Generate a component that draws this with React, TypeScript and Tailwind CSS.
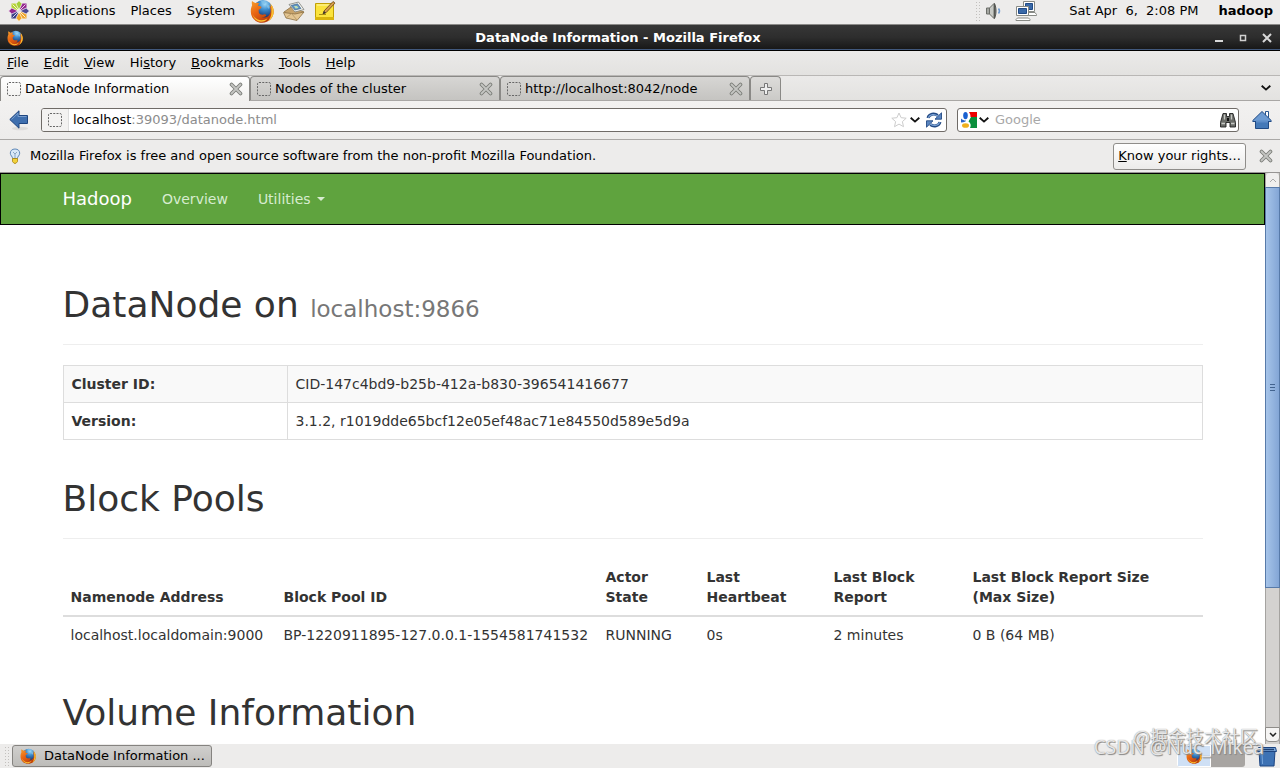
import React from 'react';

const Firefox = ({ className = '' }: { className?: string }) => (
  <svg viewBox="0 0 24 24" className={className} aria-hidden="true">
    <defs>
      <radialGradient id="ffBlue" cx="60%" cy="20%" r="75%">
        <stop offset="0" stopColor="#a5dcf8" />
        <stop offset=".4" stopColor="#3f8fd0" />
        <stop offset="1" stopColor="#14306c" />
      </radialGradient>
      <linearGradient id="ffFox" x1="0" y1="0" x2=".7" y2="1">
        <stop offset="0" stopColor="#f8a02c" />
        <stop offset=".45" stopColor="#e96613" />
        <stop offset="1" stopColor="#b5350a" />
      </linearGradient>
    </defs>
    <circle cx="13" cy="10.500" r="9.500" fill="url(#ffBlue)" />
    <path d="M11 2c2-.5 4 0 5 1l-1 2-3-.5zM17 5l3 2-1 3-2-2z" fill="#7fc0ea" opacity=".8" />
    <path d="M2 2c1.200 1 2.200 1.600 3.500 2C6.800 3.500 8 3.600 9.300 4.200 8.400 5 8 6 8.300 7c1.300.1 2.500.3 3.300 1-.5 1.500-2 2-3 3 .1.900.3 1.500.1 2.200 1 2.300 3 2.900 5 2.300 1.200-.4 2.200 0 2.600 1-1.200 1.400-2.900 2-4.600 1.700 4 1 7.300-.6 8.500-4 .9-2.600.3-5.500-.9-7.700 1 .5 1.600 1.100 2.100 1.900-.1-1.500-.6-2.800-1.400-4 2.400 1.900 3.700 5 3.700 8.200 0 6.200-5 11.200-11.400 11.200C5.900 23.800.8 18.900.8 12.700.8 10 1.200 8 2.100 6.200 1.700 4.700 1.700 3.300 2 2z" fill="url(#ffFox)" />
    <path d="M20 4.400c2.400 1.900 3.700 5 3.700 8.200 0 4.500-2.600 8.300-6.400 10.100 3.200-2.900 4.400-7 4.100-11.200.2-2.600-.2-5-1.400-7.100zM2.500 15c1.700 4 5 6.300 9 6.300 2.600 0 4.500-.8 6-2-1.300 2.700-3.800 3.700-6.700 3.500C6.700 22.400 3.500 19.500 2.500 15z" fill="#fbc02f" />
  </svg>
);

const CentOS = () => (
  <svg viewBox="0 0 22 22" className="h-[22px] w-[22px]" aria-hidden="true">
    <path d="M3.500 3.500h6.800v6.800H3.500z" fill="#b4d334" />
    <path d="M11.700 3.500h6.800v6.800h-6.800z" fill="#93278f" />
    <path d="M3.500 11.700h6.800v6.800H3.500z" fill="#3b3f86" />
    <path d="M11.700 11.700h6.800v6.800h-6.800z" fill="#f0a62a" />
    <path d="M11 .5l3 3.300L11 10 8 3.800z" fill="#a3cf3a" stroke="#fff" strokeWidth=".7" />
    <path d="M21.500 11l-3.300 3L12 11l6.200-3z" fill="#4f4a91" stroke="#fff" strokeWidth=".7" />
    <path d="M11 21.500l-3-3.300L11 12l3 6.200z" fill="#f0a62a" stroke="#fff" strokeWidth=".7" />
    <path d="M.5 11l3.300-3L10 11l-6.200 3z" fill="#93278f" stroke="#fff" strokeWidth=".7" />
    <path d="M4.500 4.500L10 10M17.500 4.500L12 10M4.500 17.500L10 12M17.500 17.500L12 12" stroke="#fff" strokeWidth=".8" />
  </svg>
);

const Envelope = () => (
  <svg viewBox="0 0 24 22" className="h-[22px] w-6" aria-hidden="true">
    <path d="M2 12l7-5 13 5-8 6z" fill="#c7a36b" stroke="#8d7145" strokeWidth=".8" />
    <path d="M7 4.500L16.500 2 22 9.500l-9 2.500z" fill="#f4f4f1" stroke="#7c7f79" strokeWidth=".8" />
    <path d="M9 5.500l6.500-1.700 3.500 4.700-6 1.500z" fill="#5f93c4" stroke="#35607f" strokeWidth=".6" />
    <path d="M12 6l3 0 1.500 2-3 .5z" fill="#bfe0b0" />
    <path d="M1.500 12.500L13 14l9-2-7 8.500L4 18z" fill="#e3c592" stroke="#8d7145" strokeWidth=".8" />
    <path d="M4 18l5.500-4.500L15 20" fill="none" stroke="#b2935d" strokeWidth=".8" />
  </svg>
);

const Note = () => (
  <svg viewBox="0 0 22 22" className="h-[22px] w-[22px]" aria-hidden="true">
    <path d="M1.500 3.500h18v16h-18z" fill="#fbe33c" stroke="#c2a006" />
    <path d="M1 17h19v3H1z" fill="#d9b40d" />
    <path d="M3 5h15" stroke="#fff7a8" />
    <path d="M9 14l1-3 9-9.500 2 1.600-9 9.600z" fill="#d99d4a" stroke="#614316" strokeWidth=".8" />
    <path d="M9 14l1-3 1.900 1.700z" fill="#333" />
    <path d="M5 14.500h7" stroke="#a68c15" />
  </svg>
);

const Speaker = () => (
  <svg viewBox="0 0 18 20" className="h-5 w-[18px]" aria-hidden="true">
    <path d="M1.500 7h3v6h-3z" fill="#a5a7a2" stroke="#6c6e69" />
    <path d="M4.500 7L9 2.500v15L4.500 13z" fill="#c8cac5" stroke="#6c6e69" />
    <path d="M9.500 2.500c2 4 2 11 0 15z" fill="#777974" stroke="#555753" />
    <path d="M13.500 7.500c1.200 1.500 1.200 3.500 0 5" fill="none" stroke="#6f9bd0" strokeWidth="1.500" />
  </svg>
);

const Network = () => (
  <svg viewBox="0 0 22 22" className="h-[22px] w-[22px]" aria-hidden="true">
    <path d="M8.500 1.500h11v10h-11z" fill="#fff" stroke="#888a85" />
    <path d="M10.500 3.500h7v6h-7z" fill="#3a69a8" stroke="#204a87" />
    <path d="M12 14l1-1.500h7l1.500 2v1H12z" fill="#fff" stroke="#888a85" />
    <path d="M1.500 6.500h12v9h-12z" fill="#fff" stroke="#888a85" />
    <path d="M3.500 8.500h8v5h-8z" fill="#3a69a8" stroke="#204a87" />
    <path d="M1 19.500l1.500-1.500h11l1.500 1.500v1H1z" fill="#fff" stroke="#888a85" />
  </svg>
);

const GrayX = () => (
  <svg viewBox="0 0 14 14" className="h-3.5 w-3.5" aria-hidden="true">
    <path d="M2.500 2.500l9 9M11.500 2.500l-9 9" stroke="#7a7c77" strokeWidth="3.600" strokeLinecap="round" />
    <path d="M2.500 2.500l9 9M11.500 2.500l-9 9" stroke="#c4c5c2" strokeWidth="1.800" strokeLinecap="round" />
  </svg>
);

const Chevron = () => (
  <svg viewBox="0 0 10 6" className="h-1.5 w-2.5" aria-hidden="true">
    <path d="M.7.8L5 4.600 9.300.8" fill="none" stroke="#111" strokeWidth="1.900" />
  </svg>
);

const Favicon = () => (
  <svg viewBox="0 0 14 14" className="h-3.5 w-3.5 shrink-0" aria-hidden="true">
    <rect x=".5" y=".5" width="13" height="13" rx="1.500" fill="none" stroke="#666" strokeDasharray="2 1.250" />
  </svg>
);

const Back = () => (
  <svg viewBox="0 0 20 22" className="h-[22px] w-5" aria-hidden="true">
    <ellipse cx="11" cy="19.500" rx="8" ry="1.800" fill="#dddcda" />
    <path d="M.8 10.500L10 1.800V6.500h8.500v8H10v4.700z" fill="#3f6fae" stroke="#1f4680" />
    <path d="M2.500 10.500L9 4.200v3.300h8.500" fill="none" stroke="#85a8d4" strokeWidth=".8" />
  </svg>
);

const Reload = () => (
  <svg viewBox="0 0 16 16" className="h-4 w-4" aria-hidden="true">
    <path d="M2 6C3 1.800 8.500 1 11.700 3.500M14 10c-1 4.200-6.500 5-9.700 2.500" fill="none" stroke="#234a85" strokeWidth="3" />
    <path d="M15.500.8v6.400H9zM.5 15.200V8.800H7z" fill="#5b86c0" stroke="#234a85" strokeWidth=".9" />
    <path d="M2.200 5.800C3.500 2.300 8.500 1.500 11.700 4M13.800 10.200c-1.300 3.500-6.300 4.300-9.500 1.800" fill="none" stroke="#7ba2d3" strokeWidth="1.200" />
  </svg>
);

const GoogleIcon = () => (
  <svg viewBox="0 0 16 16" className="h-4 w-4" aria-hidden="true">
    <path d="M0 0h16v16H0z" fill="#fff" />
    <path d="M8 0h8v5H9.500C9.500 3 9 1.500 8 0z" fill="#e00" />
    <path d="M16 5v11H9c1.500-3 .5-5-1.500-6.500L10 5z" fill="#0a8f3c" />
    <path d="M0 6.500C1.500 8 3 8.500 5 8.500c0 1-1.500 1.800-5 2z" fill="#2a63c8" />
    <ellipse cx="4.500" cy="3.600" rx="2.300" ry="3.600" fill="#1a60d0" />
    <ellipse cx="4.500" cy="13.500" rx="3.500" ry="2.300" fill="#f0b01c" />
  </svg>
);

const Binoculars = () => (
  <svg viewBox="0 0 16 16" className="h-4 w-4" aria-hidden="true">
    <path d="M3 1.500h3.500v3h3v-3H13l2.500 9v4.500h-5.500v-4.500H6v4.500H.5v-4.500z" fill="#6a6c68" stroke="#222" strokeWidth=".9" />
    <path d="M4.500 2.500v5M11.500 2.500v5M1.500 11.500h3.500M11 11.500h3.500" stroke="#c5c7c3" strokeWidth="1.300" />
    <path d="M7 6h2v3H7z" fill="#111" />
  </svg>
);

const Home = () => (
  <svg viewBox="0 0 20 20" className="h-5 w-5" aria-hidden="true">
    <path d="M13.500 1.500h3v6h-3z" fill="#fff" stroke="#26548f" />
    <path d="M3.500 10h13v8.500h-13z" fill="#4479b8" stroke="#1f4a85" />
    <path d="M10 1.500L.8 10.500v1h18.400v-1z" fill="#6d9bd2" stroke="#1f4a85" />
    <path d="M4 10.500h12v2H4z" fill="#5d8dc8" />
  </svg>
);

const Bulb = () => (
  <svg viewBox="0 0 12 16" className="h-4 w-3" aria-hidden="true">
    <path d="M6 1c3 0 4.700 1.800 4.700 4.200C10.700 7.500 8.500 8.500 8.300 10.500H3.700C3.500 8.500 1.300 7.500 1.300 5.200 1.300 2.800 3 1 6 1z" fill="#d9e8f8" stroke="#5e88b8" />
    <path d="M4 4l2 2 2-2M6 6v4" fill="none" stroke="#7794b4" strokeWidth=".8" />
    <path d="M3.500 10.500h5v3L7 15.300H5l-1.500-1.800z" fill="#f2d23a" stroke="#a98310" strokeWidth=".8" />
  </svg>
);

const Trash = () => (
  <svg viewBox="0 0 20 22" className="h-[22px] w-5" aria-hidden="true">
    <path d="M2 6h16l-1 15H3z" fill="#3d72b4" stroke="#1d4480" />
    <path d="M1.500 2.500h17l1 4H.5z" fill="#79a6da" stroke="#1d4480" />
    <path d="M3 4.500h14" stroke="#1d3f72" strokeWidth="1.500" />
    <path d="M5 9l.6 10" stroke="#76a4da" />
  </svg>
);

const Grip = () => (
  <span className="h-5 w-1.5 bg-[radial-gradient(circle,#c2c0bd_1px,transparent_1px)] bg-[size:3px_3px]" />
);

const menus = [
  ['', 'F', 'ile'],
  ['', 'E', 'dit'],
  ['', 'V', 'iew'],
  ['Hi', 's', 'tory'],
  ['', 'B', 'ookmarks'],
  ['', 'T', 'ools'],
  ['', 'H', 'elp'],
];

const tabs = ['DataNode Information', 'Nodes of the cluster', 'http://localhost:8042/node'];

const TopPanel = () => (
  <header className="flex h-[25px] shrink-0 items-center border-b border-[#8b8a88] bg-[#edeceb] pr-[7px] pb-0.5 pl-2">
    <CentOS />
    <nav className="ml-1.5 flex gap-[15px]">
      <button>Applications</button>
      <button>Places</button>
      <button>System</button>
    </nav>
    <div className="ml-[15px] flex items-center gap-2">
      <button aria-label="Firefox"><Firefox className="h-6 w-6" /></button>
      <button aria-label="Mail"><Envelope /></button>
      <button aria-label="Notes"><Note /></button>
    </div>
    <div className="ml-auto flex items-center">
      <Grip />
      <button aria-label="Volume" className="ml-1"><Speaker /></button>
      <button aria-label="Network" className="mx-3"><Network /></button>
      <span className="ml-5 whitespace-pre">Sat Apr  6,  2:08 PM</span>
      <span className="ml-5 font-bold">hadoop</span>
    </div>
  </header>
);

const TitleBar = () => (
  <div className="flex h-[26px] shrink-0 items-center border-b border-black bg-linear-to-b from-[#373737] via-[#2d2d2d] to-[#161616] px-[7px] text-white shadow-[inset_0_-1px_0_#41587c]">
    <Firefox className="h-4 w-4" />
    <h2 className="flex-1 text-center font-bold">DataNode Information - Mozilla Firefox</h2>
    <div className="flex gap-3">
      <button aria-label="Minimize">
        <svg viewBox="0 0 12 12" className="h-3 w-3"><path d="M2 9h8" stroke="#d8d8d8" strokeWidth="2" /></svg>
      </button>
      <button aria-label="Maximize">
        <svg viewBox="0 0 12 12" className="h-3 w-3"><path d="M3.500 3.500h5v5h-5z" fill="none" stroke="#d0d0d0" strokeWidth="1.500" /></svg>
      </button>
      <button aria-label="Close">
        <svg viewBox="0 0 12 12" className="h-3 w-3"><path d="M2 2l8 8M10 2l-8 8" stroke="#d8d8d8" strokeWidth="2" /></svg>
      </button>
    </div>
  </div>
);

const TabBar = () => (
  <div className="flex h-[25px] shrink-0 items-end border-b border-[#a9a7a5] bg-linear-to-b from-[#ebeae9] to-[#e3e2e0]">
    {tabs.map((tab, i) => (
      <div
        key={tab}
        className={`flex w-[250px] items-center rounded-t border border-b-0 border-[#8a8986] pr-1.5 pl-[6px] ${
          i === 0 ? '-mb-px h-[25px] bg-linear-to-b from-white to-[#f1f0ee]' : 'h-6 bg-linear-to-b from-[#d7d6d4] to-[#c5c4c1]'
        }`}
      >
        <Favicon />
        <button className="ml-1 flex-1 text-left">{tab}</button>
        <button aria-label="Close tab"><GrayX /></button>
      </div>
    ))}
    <button aria-label="New tab" className="flex h-6 w-[31px] items-center justify-center rounded-t border border-b-0 border-[#8a8986] bg-linear-to-b from-[#dddcda] to-[#cbcac7]">
      <svg viewBox="0 0 12 12" className="h-3 w-3"><path d="M4.500.5h3v4h4v3h-4v4h-3v-4h-4v-3h4z" fill="#eee" stroke="#777" /></svg>
    </button>
    <button aria-label="List all tabs" className="mr-[9px] mb-[9px] ml-auto"><Chevron /></button>
  </div>
);

const NavBar = () => (
  <div className="flex h-[39px] shrink-0 items-center border-b border-[#aaa8a6] bg-linear-to-b from-[#f2f1f0] to-[#edeceb] pr-2 pl-[9px]">
    <button aria-label="Back"><Back /></button>
    <div className="ml-3 flex h-6 flex-1 items-center overflow-hidden rounded-[3px] border border-[#6f6b67] bg-white pr-1">
      <span className="flex h-full w-[27px] items-center justify-center border-r border-[#ddd] bg-[#f3f2f1]"><Favicon /></span>
      <span className="pl-1">localhost</span>
      <input aria-label="Address" className="min-w-0 flex-1 text-[#8c8c8c] outline-none" defaultValue=":39093/datanode.html" />
      <button aria-label="Bookmark">
        <svg viewBox="0 0 16 16" className="h-4 w-4"><path d="M8 1l2.100 4.700 5.100.5-3.800 3.400 1.100 5.100L8 12.100l-4.500 2.600 1.100-5.100L.8 6.200l5.100-.5z" fill="#fff" stroke="#ccc" /></svg>
      </button>
      <button aria-label="History" className="ml-[3px]"><Chevron /></button>
      <button aria-label="Reload" className="ml-1.5"><Reload /></button>
    </div>
    <div className="ml-2.5 flex h-6 w-[282px] items-center rounded-[3px] border border-[#6f6b67] bg-white pr-0.5 pl-[3px]">
      <button aria-label="Search engine" className="flex items-center gap-0.5"><GoogleIcon /><Chevron /></button>
      <input aria-label="Search" placeholder="Google" className="ml-1.5 min-w-0 flex-1 outline-none placeholder:text-[#a8a8a8]" />
      <button aria-label="Go"><Binoculars /></button>
    </div>
    <button aria-label="Home" className="ml-[13px]"><Home /></button>
  </div>
);

const Notification = () => (
  <div className="flex h-[33px] shrink-0 items-center border-b border-[#979593] bg-[#edeceb] pr-[7px] pl-[9px]">
    <Bulb />
    <p className="ml-[9px] flex-1">Mozilla Firefox is free and open source software from the non-profit Mozilla Foundation.</p>
    <button className="h-[27px] w-[133px] rounded-[3px] border border-[#8f8d8a] bg-linear-to-b from-white to-[#ecebea]"><u>K</u>now your rights...</button>
    <button aria-label="Dismiss" className="ml-[13px]"><GrayX /></button>
  </div>
);

const Heading = ({ title, sub, className }: { title: string; sub?: string; className: string }) => (
  <h1 className={`border-b border-[#eee] pb-[19px] text-[36px] leading-10 ${className}`}>
    {title} {sub && <small className="text-[23px] leading-none text-[#777]">{sub}</small>}
  </h1>
);

const Page = () => (
  <main className="min-w-0 flex-1 overflow-hidden bg-white text-sm text-[#333]">
    <nav className="h-[52px] border border-black bg-[#5fa33e]">
      <div className="mx-auto flex h-full max-w-[1140px] items-center gap-[30px] text-[#d7ecd0]">
        <a href="#" className="text-lg text-white">Hadoop</a>
        <a href="#">Overview</a>
        <a href="#" className="flex items-center gap-1.5">
          Utilities
          <span className="border-x-4 border-t-4 border-x-transparent border-t-[#d7ecd0]" />
        </a>
      </div>
    </nav>
    <div className="mx-auto max-w-[1140px]">
      <Heading title="DataNode on" sub="localhost:9866" className="mt-[60px]" />
      <table className="mt-5 w-full border-collapse">
        <tbody>
          <tr className="bg-[#f9f9f9]">
            <th scope="row" className="w-56 border border-[#ddd] p-2 text-left">Cluster ID:</th>
            <td className="border border-[#ddd] p-2">CID-147c4bd9-b25b-412a-b830-396541416677</td>
          </tr>
          <tr>
            <th scope="row" className="border border-[#ddd] p-2 text-left">Version:</th>
            <td className="border border-[#ddd] p-2">3.1.2, r1019dde65bcf12e05ef48ac71e84550d589e5d9a</td>
          </tr>
        </tbody>
      </table>
      <Heading title="Block Pools" className="mt-[39px]" />
      <table className="mt-5 w-full table-fixed">
        <thead>
          <tr className="border-b-2 border-[#ddd] text-left align-bottom">
            <th className="w-[213px] p-2">Namenode Address</th>
            <th className="w-[322px] p-2">Block Pool ID</th>
            <th className="w-[101px] p-2">Actor State</th>
            <th className="w-[127px] p-2">Last Heartbeat</th>
            <th className="w-[139px] p-2">Last Block Report</th>
            <th className="p-2">Last Block Report Size (Max&nbsp;Size)</th>
          </tr>
        </thead>
        <tbody>
          <tr>
            <td className="p-2">localhost.localdomain:9000</td>
            <td className="p-2">BP-1220911895-127.0.0.1-1554581741532</td>
            <td className="p-2">RUNNING</td>
            <td className="p-2">0s</td>
            <td className="p-2">2 minutes</td>
            <td className="p-2">0 B (64 MB)</td>
          </tr>
        </tbody>
      </table>
      <Heading title="Volume Information" className="mt-10" />
    </div>
  </main>
);

const Scrollbar = () => (
  <div className="flex w-[15px] shrink-0 flex-col border-x border-[#a5a3a0] bg-[#d4d2d0]">
    <button aria-label="Scroll up" className="flex h-3.5 shrink-0 items-center justify-center rounded-t bg-[#f0efee]">
      <svg viewBox="0 0 8 5" className="h-[5px] w-2"><path d="M1 4l3-3 3 3" fill="none" stroke="#aaa" /></svg>
    </button>
    <div className="-mx-px flex h-[401px] flex-col items-center justify-center gap-0.5 border border-[#577aa9] bg-linear-to-r from-[#a6c4e9] to-[#83a6d6]">
      <span className="h-px w-[5px] bg-[#42638f]" />
      <span className="h-px w-[5px] bg-[#42638f]" />
      <span className="h-px w-[5px] bg-[#42638f]" />
    </div>
    <button aria-label="Scroll down" className="-mx-px mt-auto mb-0.5 flex h-[15px] items-center justify-center rounded-b border border-[#8f8d8a] bg-[#f5f4f3]">
      <svg viewBox="0 0 8 5" className="h-[5px] w-2"><path d="M1 1l3 3 3-3" fill="none" stroke="#222" strokeWidth="1.500" /></svg>
    </button>
  </div>
);

const BottomPanel = () => (
  <footer className="flex h-6 shrink-0 items-center bg-[#edeceb] pr-[3px] pl-1">
    <Grip />
    <button className="ml-0.5 flex h-[22px] w-[200px] items-center rounded-[3px] border border-[#858380] bg-linear-to-b from-[#d0cfcd] to-[#bdbcb9] pl-[7px]">
      <Firefox className="h-4 w-4 shrink-0" />
      <span className="ml-2 whitespace-nowrap">DataNode Information ...</span>
    </button>
    <div className="ml-auto flex h-[22px] overflow-hidden rounded-[3px]">
      <button aria-label="Workspace 1" className="flex w-[34px] items-center justify-center border border-white bg-[#cfe0f5]">
        <Firefox className="h-4 w-4" />
      </button>
      <button aria-label="Workspace 2" className="w-[34px] bg-[#a8a5a2]" />
    </div>
    <button aria-label="Trash" className="ml-3"><Trash /></button>
  </footer>
);

const App = () => (
  <div className="relative flex h-screen flex-col overflow-hidden bg-white font-['DejaVu_Sans',sans-serif] text-[13px] leading-5 text-black">
    <TopPanel />
    <TitleBar />
    <nav className="flex h-[25px] shrink-0 items-center gap-[15px] border-b border-[#b9b7b5] bg-linear-to-b from-[#ebeae9] to-[#e3e2e0] px-[7px]">
      {menus.map(([before, key, after]) => (
        <button key={key + after}>{before}<u>{key}</u>{after}</button>
      ))}
    </nav>
    <TabBar />
    <NavBar />
    <Notification />
    <div className="flex min-h-0 flex-1">
      <Page />
      <Scrollbar />
    </div>
    <BottomPanel />
    <span className="pointer-events-none absolute right-[22px] bottom-[18px] font-['Noto_Sans_CJK_SC',sans-serif] text-lg leading-7 text-white/80 [text-shadow:0_0_1px_#777,1px_1px_1px_#888]">@掘金技术社区</span>
    <span className="pointer-events-none absolute right-4 bottom-[7px] font-['Noto_Sans',sans-serif] text-[19px] leading-7 text-white/80 [text-shadow:0_0_1px_#777,1px_1px_1px_#888]">CSDN @Nuc_Mikea</span>
  </div>
);

export default App;
